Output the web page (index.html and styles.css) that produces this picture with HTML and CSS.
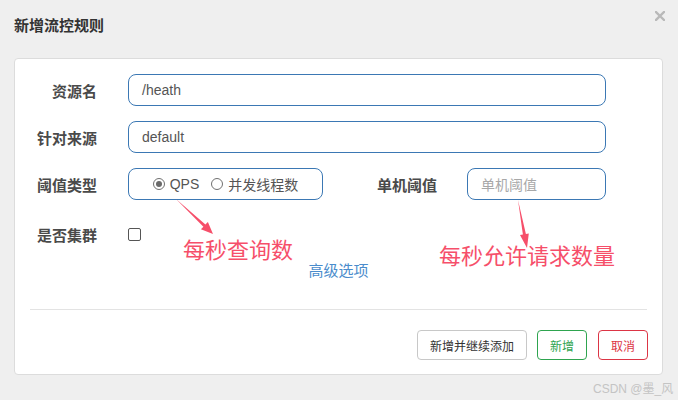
FILE: index.html
```html
<!DOCTYPE html>
<html lang="zh-CN">
<head>
<meta charset="utf-8">
<title>新增流控规则</title>
<link rel="stylesheet" href="styles.css">
</head>
<body>
<div class="dialog">
  <div class="header">
    <div class="title">新增流控规则</div>
    <svg class="close" width="10" height="10" viewBox="0 0 10 10"><path d="M1 1 L9 9 M9 1 L1 9" stroke="#b9b9b9" stroke-width="2.4" stroke-linecap="square"/></svg>
  </div>
  <div class="card">
    <div class="row">
      <label class="lbl">资源名</label>
      <div class="input wide"><span class="val">/heath</span></div>
    </div>
    <div class="row">
      <label class="lbl">针对来源</label>
      <div class="input wide"><span class="val">default</span></div>
    </div>
    <div class="row">
      <label class="lbl">阈值类型</label>
      <div class="radio-group">
        <span class="radio checked"></span><span class="rtext">QPS</span>
        <span class="radio second"></span><span class="rtext">并发线程数</span>
      </div>
      <label class="lbl lbl2">单机阈值</label>
      <div class="input narrow"><span class="ph">单机阈值</span></div>
    </div>
    <div class="row row4">
      <label class="lbl">是否集群</label>
      <span class="checkbox"></span>
    </div>
    <div class="adv"><a class="link">高级选项</a></div>
    <div class="divider"></div>
    <div class="footer">
      <button class="btn">新增并继续添加</button>
      <button class="btn btn-green">新增</button>
      <button class="btn btn-red">取消</button>
    </div>
  </div>
</div>
<svg class="arrows" width="678" height="400" viewBox="0 0 678 400">
  <polygon fill="#f64f6a" points="176,199 205.4,224.5 207.9,222.0 213,234 200.9,229.2 203.4,226.7"/>
  <polygon fill="#f64f6a" points="518,200 525.9,233.9 528.8,233.4 527,248 520.0,235.0 522.9,234.5"/>
</svg>
<div class="note note1">每秒查询数</div>
<div class="note note2">每秒允许请求数量</div>
<div class="watermark">CSDN @墨_风</div>
</body>
</html>
```
FILE: styles.css
```css
* { box-sizing: border-box; }
body {
  margin: 0;
  width: 678px;
  height: 400px;
  background: #efefef;
  position: relative;
  overflow: hidden;
  font-family: "Liberation Sans", "Noto Sans CJK SC", sans-serif;
  color: #444;
}
.dialog { width: 678px; height: 400px; }
.header {
  height: 58px;
  display: flex;
  justify-content: space-between;
  align-items: flex-start;
  padding: 0 13px 0 14px;
}
.title {
  margin-top: 16px;
  font-size: 15px;
  line-height: 20px;
  font-weight: bold;
  color: #333;
}
.close { margin-top: 11px; }
.card {
  margin: 0 15px 0 14px;
  height: 317px;
  background: #fff;
  border: 1px solid #dcdcdc;
  border-radius: 4px;
  padding-top: 15px;
}
.row {
  display: flex;
  align-items: center;
  height: 32px;
  margin-bottom: 15px;
}
.row4 { margin-top: 18px; margin-bottom: 0; }
.lbl {
  width: 82px;
  margin-right: 31px;
  text-align: right;
  font-size: 15px;
  font-weight: bold;
  color: #4a4a4a;
}
.lbl2 { width: 114px; margin-right: 30px; }
.input {
  height: 32px;
  border: 1px solid #3b78b4;
  border-radius: 8px;
  display: flex;
  align-items: center;
  padding-left: 13px;
  font-size: 14px;
}
.wide { width: 478px; }
.narrow { width: 139px; }
.val { color: #555; }
.ph { color: #a8a8a8; }
.radio-group {
  width: 195px;
  height: 32px;
  border: 1px solid #3b78b4;
  border-radius: 8px;
  display: flex;
  align-items: center;
  justify-content: center;
  font-size: 14px;
  color: #555;
}
.radio {
  width: 12px;
  height: 12px;
  border: 1px solid #707070;
  border-radius: 50%;
  margin-right: 5px;
  position: relative;
}
.radio.checked::after {
  content: "";
  position: absolute;
  left: 2px;
  top: 2px;
  width: 6px;
  height: 6px;
  border-radius: 50%;
  background: #6a6a6a;
}
.radio.second { margin-left: 12px; }
.checkbox {
  width: 13px;
  height: 13px;
  border: 1px solid #555;
  border-radius: 2px;
}
.adv {
  margin-top: 11px;
  text-align: center;
  line-height: 20px;
  font-size: 15px;
}
.link { color: #4a8ccc; }
.divider {
  margin: 28px 15px 0;
  border-top: 1px solid #e3e3e3;
}
.footer {
  display: flex;
  justify-content: flex-end;
  margin-top: 20px;
  padding-right: 14px;
  gap: 10px;
}
.btn {
  height: 30px;
  padding: 0 12px;
  background: #fff;
  border: 1px solid #c8c8c8;
  border-radius: 4px;
  font-family: "Liberation Sans", "Noto Sans CJK SC", sans-serif;
  font-size: 12px;
  color: #333;
}
.btn-green { border-color: #2ea44f; color: #2ea44f; }
.btn-red { border-color: #dc3545; color: #dc3545; margin-left: 1px; }
.arrows {
  position: absolute;
  left: 0;
  top: 0;
  pointer-events: none;
}
.note {
  position: absolute;
  font-size: 22px;
  line-height: 24px;
  color: #f64f6a;
  white-space: nowrap;
}
.note1 { left: 183px; top: 239px; }
.note2 { left: 439px; top: 245px; }
.watermark {
  position: absolute;
  left: 593px;
  top: 379px;
  font-size: 12px;
  color: #c4c4c4;
}
```
